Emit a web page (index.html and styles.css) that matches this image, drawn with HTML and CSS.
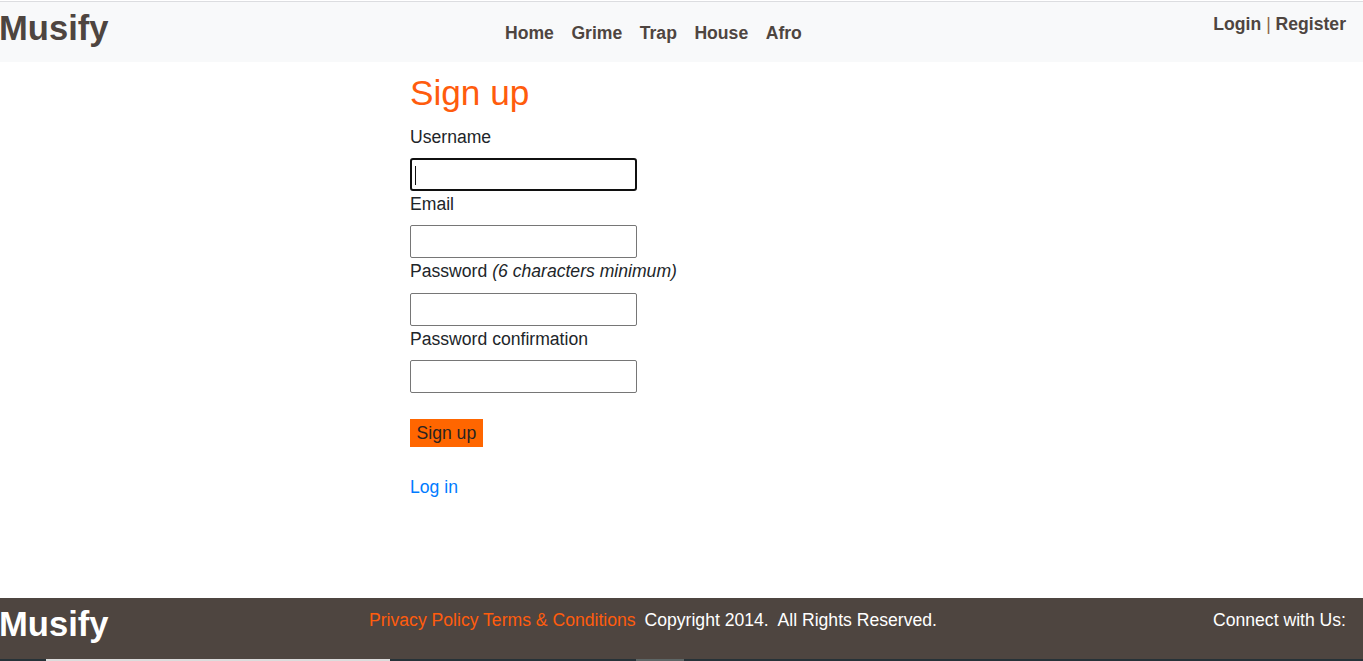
FILE: index.html
```html
<!DOCTYPE html>
<html>
<head>
<meta charset="utf-8">
<title>Musify</title>
<link rel="stylesheet" href="styles.css">
</head>
<body>
<div class="page">
  <header class="topbar">
    <a class="brand" href="#">Musify</a>
    <nav class="nav">
      <a href="#">Home</a>
      <a href="#">Grime</a>
      <a href="#">Trap</a>
      <a href="#">House</a>
      <a href="#">Afro</a>
    </nav>
    <div class="account"><a href="#">Login</a> <span class="sep">|</span> <a href="#">Register</a></div>
  </header>

  <main class="main">
    <h2 class="title">Sign up</h2>
    <form class="form">
      <label class="label">Username</label>
      <input class="field focused" type="text">
      <label class="label">Email</label>
      <input class="field" type="email">
      <label class="label">Password <em>(6 characters minimum)</em></label>
      <input class="field" type="password">
      <label class="label">Password confirmation</label>
      <input class="field" type="password">
      <div class="actions"><button class="btn" type="button">Sign up</button></div>
    </form>
    <a class="login-link" href="#">Log in</a>
  </main>

  <footer class="footer">
    <span class="brand brand-light">Musify</span>
    <div class="foot-mid">
      <a href="#">Privacy Policy</a> <a href="#">Terms &amp; Conditions</a>
      <span class="copy">Copyright 2014.&nbsp; All Rights Reserved.</span>
    </div>
    <div class="connect">Connect with Us:</div>
  </footer>
  <div class="strip"><span class="s1"></span><span class="s2"></span></div>
</div>
</body>
</html>
```

FILE: styles.css
```css
* { box-sizing: border-box; }
html, body { margin: 0; padding: 0; background: #fff; }
body {
  font-family: "Liberation Sans", Arial, sans-serif;
  font-size: 17.6px;
  color: #212529;
}
a { text-decoration: none; }
.page { min-height: 661px; display: flex; flex-direction: column; }

.topbar {
  margin-top: 1px;
  border-top: 1px solid #dcdde0;
  background: #f8f9fa;
  height: 61px;
  display: flex;
  align-items: flex-start;
}
.brand {
  font-weight: bold;
  font-size: 34.6px;
  line-height: 40px;
  color: #4e4540;
  margin-top: 6px;
  margin-left: -1px;
  flex: none;
  width: 109px;
}
.nav {
  display: flex;
  gap: 17.5px;
  margin-left: 397px;
  margin-top: 19px;
}
.nav a, .account a {
  font-weight: bold;
  font-size: 17.6px;
  line-height: 24px;
  color: #4e4540;
}
.account {
  margin-left: auto;
  margin-right: 17px;
  margin-top: 10px;
  line-height: 24px;
  color: #4e4540;
}
.sep { color: #8a6446; }

.main {
  padding: 10px 0 0 410px;
  flex: 1;
}
.title {
  margin: 0 0 9.5px;
  font-size: 35.2px;
  font-weight: normal;
  line-height: 42px;
  color: #ff5c0d;
}
.form { display: flex; flex-direction: column; align-items: flex-start; }
.label {
  display: block;
  line-height: 26.4px;
  margin-bottom: 8px;
}
.label em { font-style: italic; }
.field {
  width: 227px;
  height: 33px;
  border: 1px solid #767676;
  border-radius: 2px;
  background: #fff;
  font-size: 17.6px;
  padding: 1px 2px;
  margin: 0;
}
.field.focused {
  border: 2px solid #101010;
  border-radius: 3px;
  caret-color: #000;
  background: linear-gradient(#111, #111) no-repeat 3px 6px / 1px 19px, #fff;
}
.actions { margin-top: 26px; }
.btn {
  background: #ff6600;
  border: none;
  color: #2a2320;
  font-family: "Liberation Sans", Arial, sans-serif;
  font-size: 17.6px;
  line-height: 22px;
  padding: 3px 6.5px;
  margin: 0;
}
.login-link {
  display: inline-block;
  margin-top: 27px;
  color: #007bff;
  line-height: 26px;
}

.footer {
  background: #4e4540;
  height: 61px;
  display: flex;
  align-items: flex-start;
  color: #fff;
}
.brand-light { color: #fff; margin-top: 6px; }
.foot-mid {
  margin-left: 261px;
  margin-top: 10px;
  line-height: 24px;
}
.foot-mid a { color: #ff5c0d; }
.copy { margin-left: 4px; color: #fff; }
.connect {
  margin-left: auto;
  margin-right: 17px;
  margin-top: 10px;
  line-height: 24px;
}
.strip {
  height: 2px;
  background: #263238;
  position: relative;
}
.strip span { position: absolute; top: 0; height: 2px; }
.s1 { left: 46px; width: 344px; background: #dcdcdc; }
.s2 { left: 636px; width: 48px; background: #5d6666; }
```
